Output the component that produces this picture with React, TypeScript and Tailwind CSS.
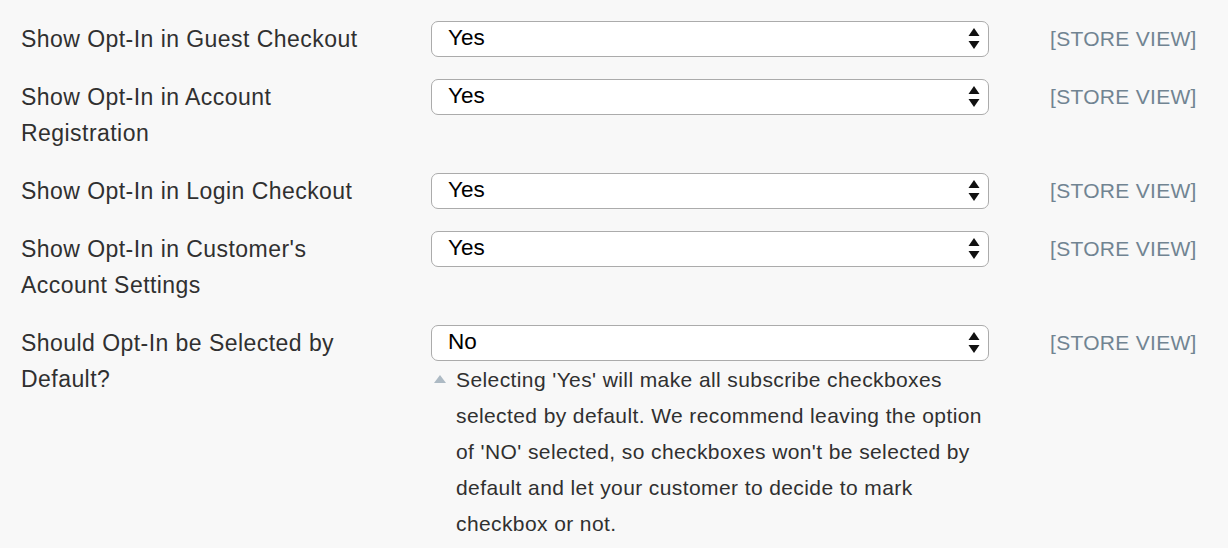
import React from "react";

interface Field {
  label: string;
  value: string;
  note?: string;
}

const fields: Field[] = [
  { label: "Show Opt-In in Guest Checkout", value: "Yes" },
  { label: "Show Opt-In in Account Registration", value: "Yes" },
  { label: "Show Opt-In in Login Checkout", value: "Yes" },
  { label: "Show Opt-In in Customer's Account Settings", value: "Yes" },
  {
    label: "Should Opt-In be Selected by Default?",
    value: "No",
    note:
      "Selecting 'Yes' will make all subscribe checkboxes selected by default. We recommend leaving the option of 'NO' selected, so checkboxes won't be selected by default and let your customer to decide to mark checkbox or not.",
  },
];

function SelectBox({ value }: { value: string }) {
  return (
    <div className="h-9 w-full flex items-center justify-between rounded-[7px] border-[1.5px] border-[#ababab] bg-white pl-[16px] pr-[8px]">
      <span className="text-[22.5px] leading-none text-black -mt-[2px]">{value}</span>
      <svg width="12" height="22" viewBox="0 0 12 22" className="block">
        <path d="M6 0 L11.5 8 L0.5 8 Z" fill="#111" />
        <path d="M0.5 13 L11.5 13 L6 21 Z" fill="#111" />
      </svg>
    </div>
  );
}

function Row({ field }: { field: Field }) {
  return (
    <div className="flex items-start">
      <div className="w-[410px] shrink-0 pr-[38px] text-[23px] leading-[36px] tracking-[0.45px] text-[#303030]">
        {field.label}
      </div>
      <div className="w-[558px] shrink-0">
        <SelectBox value={field.value} />
        {field.note && (
          <div className="mt-px flex items-start">
            <svg width="14" height="36" viewBox="0 0 14 36" className="shrink-0 ml-[2px]">
              <path d="M7 13 L13 21 L1 21 Z" fill="#adbac4" />
            </svg>
            <p className="ml-[9px] pr-[2px] text-[21px] leading-[36px] tracking-[0.4px] text-[#303030]">
              {field.note}
            </p>
          </div>
        )}
      </div>
      <div className="ml-[61px] text-[21px] leading-[36px] tracking-[0.3px] text-[#718492] whitespace-nowrap">
        [STORE VIEW]
      </div>
    </div>
  );
}

export default function App() {
  return (
    <div
      className="min-h-[548px] w-[1228px] bg-[#f8f8f8] pl-[21px] pt-[21px]"
      style={{ fontFamily: '"Liberation Sans", Arial, sans-serif' }}
    >
      <div className="flex flex-col gap-[22px]">
        {fields.map((f) => (
          <Row key={f.label} field={f} />
        ))}
      </div>
    </div>
  );
}
